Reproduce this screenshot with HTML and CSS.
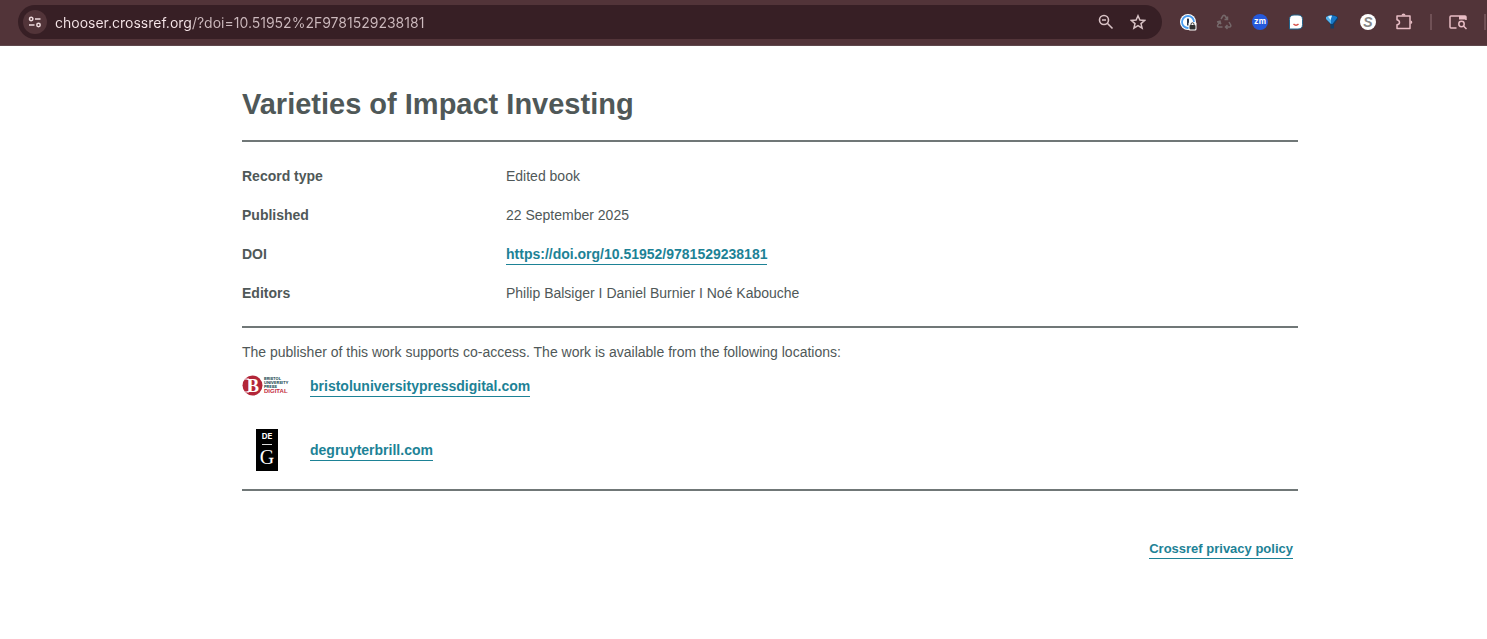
FILE: index.html
```html
<!DOCTYPE html>
<html lang="en">
<head>
    <meta charset="utf-8">
    <title>Varieties of Impact Investing</title>
    <link rel="stylesheet" href="styles.css">
</head>
<body>
    <header class="toolbar">
        <div class="address-bar">
            <button class="site-info" aria-label="View site information">
                <svg width="14" height="14" viewBox="0 0 14 14" fill="none" stroke="currentColor" stroke-width="1.5">
                    <circle cx="3.2" cy="4" r="1.7"/>
                    <path d="M7 4h5.5M1 10h5.5"/>
                    <circle cx="10.5" cy="10" r="1.7"/>
                </svg>
            </button>
            <input class="url" type="text" aria-label="Address" value="chooser.crossref.org/?doi=10.51952%2F9781529238181">
            <button class="icon-btn" aria-label="Zoom">
                <svg width="16" height="16" viewBox="0 0 16 16" fill="none" stroke="currentColor" stroke-width="1.6">
                    <circle cx="6" cy="6" r="4.5"/>
                    <path d="M9.3 9.3l5.2 5.2M4 6h4"/>
                </svg>
            </button>
            <button class="icon-btn" aria-label="Bookmark this tab">
                <svg width="16" height="16" viewBox="0 0 16 16" fill="none" stroke="currentColor" stroke-width="1.5">
                    <path d="M8 1.800l1.900 4.300 4.700.4-3.600 3.100 1.100 4.600-4.100-2.500-4.100 2.500L5 9.600 1.400 6.500l4.700-.4z"/>
                </svg>
            </button>
        </div>
        <div class="extensions">
            <button class="icon-btn" aria-label="1Password">
                <svg width="18" height="18" viewBox="0 0 18 18">
                    <circle cx="9" cy="9" r="8" fill="#fff"/>
                    <circle cx="9" cy="9" r="6" fill="#fff" stroke="#4a9df0" stroke-width="1.800"/>
                    <rect x="8" y="5.500" width="2" height="7" rx=".6" fill="#26344a"/>
                    <rect x="9.500" y="9" width="8" height="8.500" rx="1.500" fill="#fff"/>
                    <rect x="10.500" y="12" width="6" height="4.500" rx="1" fill="#333"/>
                    <path d="M12 12.500v-1.200a1.500 1.500 0 013 0v1.200" fill="none" stroke="#333"/>
                </svg>
            </button>
            <button class="icon-btn" aria-label="Recycle">
                <svg width="16" height="16" viewBox="0 0 16 16" fill="none" stroke="#75686a" stroke-width="1.500">
                    <path d="M5 5l2-3.200q1-1.300 2 0l2 3.200M11.500 2.500v3H8.500"/>
                    <path d="M13 8l1.700 3q.6 1.800-1.200 2H9.500M11.500 11l-2 2 2 2"/>
                    <path d="M6.500 13H3q-2-.2-1.300-2L4 7.500M1 8l3-.8.800 3"/>
                </svg>
            </button>
            <button class="icon-btn" aria-label="Zoom meetings">
                <svg width="16" height="16" viewBox="0 0 16 16">
                    <circle cx="8" cy="8" r="8" fill="#2559db"/>
                    <text class="zm-text" x="8" y="10">zm</text>
                </svg>
            </button>
            <button class="icon-btn" aria-label="Assistant">
                <svg width="16" height="16" viewBox="0 0 16 16">
                    <path d="M6 1h4q4.500 0 4.500 4.500v5q0 4.500-4.500 4.500H1.500V5.500Q1.500 1 6 1z" fill="#fff" stroke="#24648c"/>
                    <path d="M5.500 10q2.500 2.500 5 0" fill="none" stroke="#d64b43" stroke-width="1.400"/>
                </svg>
            </button>
            <button class="icon-btn" aria-label="Gem">
                <svg width="16" height="16" viewBox="0 0 16 16">
                    <path d="M2 3q6-4 12 0v2L10 10.500v4H6.500v-4L2 5z" fill="#123e67"/>
                    <path d="M2 3q3-2 6-2v9H7L2 5z" fill="#58b5ee"/>
                    <path d="M7 1.500q4-.5 6 1.500v1L8.500 10H7z" fill="#1777c8"/>
                    <path d="M4 2.500l4-.7L6.500 6z" fill="#d8f1ff"/>
                </svg>
            </button>
            <button class="icon-btn" aria-label="Scholar">
                <svg width="16" height="16" viewBox="0 0 16 16">
                    <circle cx="8" cy="8" r="8" fill="#fff"/>
                    <text class="scholar-text" x="8" y="13">S</text>
                </svg>
            </button>
            <button class="icon-btn" aria-label="Extensions">
                <svg width="18" height="18" viewBox="0 0 18 18" fill="none" stroke="currentColor" stroke-width="1.500">
                    <path d="M2 3h13v12.500H2v-3.700q2.500-.3 2.500-2.300T2 6.700z" stroke-linejoin="round"/>
                    <path d="M6.500 2.500a2 2 0 014 0zM15.500 7.500a1.800 1.800 0 010 3.600z" fill="currentColor" stroke="none"/>
                </svg>
            </button>
            <span class="divider"></span>
            <button class="icon-btn" aria-label="Side panel search">
                <svg width="18" height="18" viewBox="0 0 18 18" fill="none" stroke="currentColor" stroke-width="1.500">
                    <path d="M7.500 15H2q-1 0-1-1V4q0-1 1-1h14q1 0 1 1v3"/>
                    <path d="M10 3h7v3.500h-7z" fill="currentColor" stroke="none"/>
                    <circle cx="12.500" cy="11" r="2.700"/>
                    <path d="M14.500 13l3 3"/>
                </svg>
            </button>
            <span class="divider"></span>
        </div>
    </header>

    <main class="page">
        <h1>Varieties of Impact Investing</h1>
        <dl class="record">
            <dt>Record type</dt>
            <dd>Edited book</dd>
            <dt>Published</dt>
            <dd>22 September 2025</dd>
            <dt>DOI</dt>
            <dd><a href="https://doi.org/10.51952/9781529238181">https://doi.org/10.51952/9781529238181</a></dd>
            <dt>Editors</dt>
            <dd>Philip Balsiger I Daniel Burnier I Noé Kabouche</dd>
        </dl>

        <section class="locations">
            <p>The publisher of this work supports co-access. The work is available from the following locations:</p>
            <ul>
                <li>
                    <svg width="50" height="22" viewBox="0 0 50 22" role="img" aria-label="Bristol University Press Digital">
                        <circle cx="10.500" cy="10.500" r="10" fill="#b32639"/>
                        <path d="M3 4h4v13H3" fill="none" stroke="#fff"/>
                        <text class="bristol-b" x="5" y="17">B</text>
                        <text class="bristol-name" x="22" y="5">BRISTOL</text>
                        <text class="bristol-name" x="22" y="9">UNIVERSITY</text>
                        <text class="bristol-name" x="22" y="13">PRESS</text>
                        <text class="bristol-digital" x="22" y="18">DIGITAL</text>
                    </svg>
                    <div><a href="https://bristoluniversitypressdigital.com">bristoluniversitypressdigital.com</a></div>
                </li>
                <li>
                    <svg width="50" height="42" viewBox="0 0 50 42" role="img" aria-label="De Gruyter">
                        <rect x="14" width="22" height="42" fill="#000"/>
                        <text class="dg-de" x="25" y="10">DE</text>
                        <path d="M20 15.500h10" stroke="#ddd"/>
                        <text class="dg-g" x="25" y="35">G</text>
                    </svg>
                    <div><a href="https://degruyterbrill.com">degruyterbrill.com</a></div>
                </li>
            </ul>
        </section>

        <footer class="footer">
            <a href="#privacy">Crossref privacy policy</a>
        </footer>
    </main>
</body>
</html>
```

FILE: styles.css
```css
* {
    box-sizing: border-box;
}
body {
    margin: 0;
    background: #fff;
    color: #4f5858;
    font-family: "Liberation Sans", Arial, sans-serif;
    font-size: 14px;
    line-height: 20px;
}
.toolbar {
    display: flex;
    align-items: center;
    height: 46px;
    padding: 0 2px 1px 18px;
    background: #523439;
    border-bottom: 1px solid #5f484c;
}
.address-bar {
    display: flex;
    flex: 1;
    align-items: center;
    gap: 14px;
    height: 34px;
    padding: 0 15px 0 5px;
    border-radius: 17px;
    background: #371f25;
    color: #d8c2c5;
}
button {
    display: flex;
    align-items: center;
    justify-content: center;
    padding: 0;
    border: none;
    background: none;
    color: inherit;
    cursor: pointer;
}
svg {
    flex: none;
}
.site-info {
    width: 24px;
    height: 24px;
    border-radius: 50%;
    background: #523439;
    color: #f0dcdf;
}
/* host part brighter than the path */
.url {
    flex: 1;
    min-width: 0;
    margin-left: -6px;
    padding: 0;
    border: none;
    outline: none;
    background: linear-gradient(90deg, #f7e6e9 138px, #cdbabe 138px);
    background-clip: text;
    -webkit-background-clip: text;
    color: transparent;
    caret-color: #f7e6e9;
    font-family: Inter, sans-serif;
    font-size: 14px;
}
.icon-btn {
    width: 18px;
    height: 18px;
    flex: none;
}
.extensions {
    display: flex;
    align-items: center;
    gap: 18px;
    margin-left: 17px;
    color: #e8bcc4;
}
.divider {
    width: 2px;
    height: 16px;
    margin: 0 -1px;
    background: #705156;
}
.zm-text {
    fill: #fff;
    font: bold 8px Inter, sans-serif;
    text-anchor: middle;
}
.scholar-text {
    fill: #888;
    font: italic bold 14px "Liberation Sans", sans-serif;
    text-anchor: middle;
}
.page {
    padding: 38px 189px 0 242px;
}
h1 {
    margin: 0;
    padding-bottom: 16px;
    border-bottom: 2px solid #707777;
    font-size: 29px;
    line-height: 40px;
}
.record {
    display: grid;
    grid-template-columns: 1fr 3fr;
    row-gap: 19px;
    margin: 0;
    padding: 24px 0 23px;
    border-bottom: 2px solid #707777;
}
dt {
    font-weight: bold;
}
dd {
    margin: 0;
}
a {
    padding-bottom: 2px;
    border-bottom: 1px solid #1d8296;
    color: #1d8296;
    font-weight: bold;
    text-decoration: none;
}
.locations {
    padding: 14px 0 18px;
    border-bottom: 2px solid #707777;
}
.locations p {
    margin: 0;
}
.locations ul {
    display: flex;
    flex-direction: column;
    gap: 32px;
    margin: 13px 0 0;
    padding: 0;
    list-style: none;
}
.locations li {
    display: flex;
    align-items: center;
    gap: 18px;
}
.bristol-b {
    fill: #fff;
    font: bold 18px "Liberation Serif", serif;
}
.bristol-name {
    fill: #17484f;
    font: bold 4px Inter, sans-serif;
}
.bristol-digital {
    fill: #c32a3d;
    font: bold 6px "Liberation Sans", sans-serif;
}
.dg-de {
    fill: #fff;
    font: bold 8px Inter, sans-serif;
    text-anchor: middle;
}
.dg-g {
    fill: #fff;
    font: 20px "Liberation Serif", serif;
    text-anchor: middle;
}
.footer {
    padding: 48px 5px 0;
    font-size: 13px;
    text-align: right;
}
```
